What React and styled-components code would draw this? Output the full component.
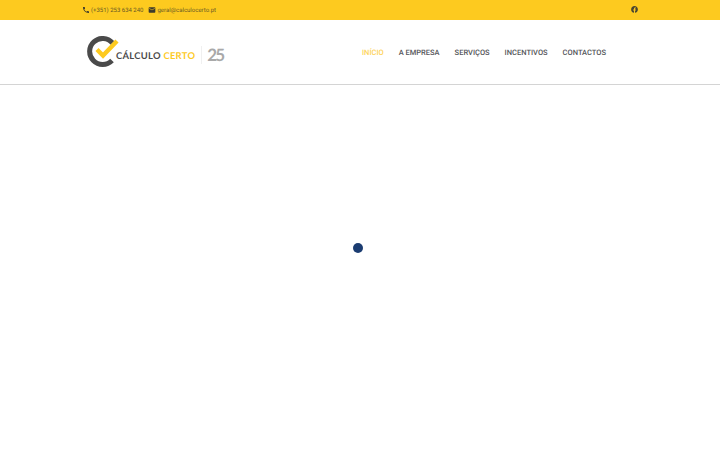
import React from "react";
import styled, { createGlobalStyle } from "styled-components";
import { FaFacebook } from "react-icons/fa";
import { MdPhone, MdEmail } from "react-icons/md";

const GlobalStyle = createGlobalStyle`
  html, body {
    margin: 0;
    padding: 0;
    background: #fff;
  }
  body {
    font-family: Roboto, "Liberation Sans", sans-serif;
    text-rendering: geometricPrecision;
    overflow: hidden;
  }
`;

const App = () => {
  return (
    <Page>
      <GlobalStyle />
      <TopBar>
        <Contacts>
          <ContactItem>
            <MdPhone size={8} />
            (+351) 253 634 240
          </ContactItem>
          <ContactItem>
            <MdEmail size={8} />
            geral@calculocerto.pt
          </ContactItem>
        </Contacts>
        <SocialLink>
          <FaFacebook size={7} />
        </SocialLink>
      </TopBar>
      <Header>
        <Logo>
          <LogoMark viewBox="0 0 32 32">
            <path
              d="M25.5 7A13 13 0 1 0 25 24.5"
              fill="none"
              stroke="#4a4a4a"
              strokeWidth="5"
            />
            <path
              d="M10 13.5L16 19.5L30 5"
              fill="none"
              stroke="#fdca1f"
              strokeWidth="4.4"
            />
          </LogoMark>
          <LogoName>
            CÁLCULO <LogoAccent>CERTO</LogoAccent>
          </LogoName>
          <LogoDivider />
          <LogoYears>25</LogoYears>
        </Logo>
        <Nav>
          <NavItem $active>INÍCIO</NavItem>
          <NavItem>A EMPRESA</NavItem>
          <NavItem>SERVIÇOS</NavItem>
          <NavItem>INCENTIVOS</NavItem>
          <NavItem>CONTACTOS</NavItem>
        </Nav>
      </Header>
      <Loader>
        <LoaderDot />
      </Loader>
    </Page>
  );
};

const Page = styled.div`
  width: 720px;
  height: 450px;
  display: flex;
  flex-direction: column;
  background: #fff;
`;

const TopBar = styled.div`
  height: 20px;
  flex: none;
  padding: 0 82px;
  display: flex;
  align-items: center;
  justify-content: space-between;
  box-sizing: border-box;
  background: #fdca1f;
`;

const Contacts = styled.div`
  display: flex;
  gap: 5px;
  padding-top: 1px;
`;

const ContactItem = styled.span`
  display: flex;
  align-items: center;
  gap: 1px;
  color: #6b5a24;
  font-size: 6px;
  line-height: 10px;

  svg {
    color: #3d3a2c;
    margin-top: -2px;
  }
`;

const SocialLink = styled.span`
  display: flex;
  margin-top: -1px;
  color: #4a4630;
`;

const Header = styled.header`
  height: 65px;
  flex: none;
  padding: 0 114px 0 87px;
  display: flex;
  align-items: center;
  justify-content: space-between;
  box-sizing: border-box;
  border-bottom: 1px solid #d4d4d4;
`;

const Logo = styled.div`
  display: flex;
  align-items: center;
`;

const LogoMark = styled.svg`
  width: 32px;
  height: 32px;
  margin-right: -3px;
`;

const LogoName = styled.span`
  margin-top: 9px;
  color: #4a4a4a;
  font-family: Lato, sans-serif;
  font-size: 9.4px;
  font-weight: 700;
  letter-spacing: 0.3px;
  white-space: pre;
`;

const LogoAccent = styled.span`
  color: #fdca1f;
`;

const LogoDivider = styled.span`
  width: 1px;
  height: 18px;
  margin: 6px 5px 0 6px;
  background: #f0f0f0;
`;

const LogoYears = styled.span`
  margin-top: 5px;
  color: #a9a9a9;
  font-family: Lato, sans-serif;
  font-size: 17px;
  font-weight: 700;
  letter-spacing: -2px;
`;

const Nav = styled.nav`
  display: flex;
  gap: 15px;
  padding-top: 2px;
`;

const NavItem = styled.span`
  color: ${(props) => (props.$active ? "#fdd35a" : "#55565a")};
  font-size: 7.5px;
  font-weight: 500;
  line-height: 12px;
`;

const Loader = styled.div`
  flex: 1;
  padding: 157.5px 0 0 352.5px;
`;

const LoaderDot = styled.div`
  width: 10px;
  height: 10px;
  border-radius: 50%;
  background: #1b3c71;
`;

export default App;
